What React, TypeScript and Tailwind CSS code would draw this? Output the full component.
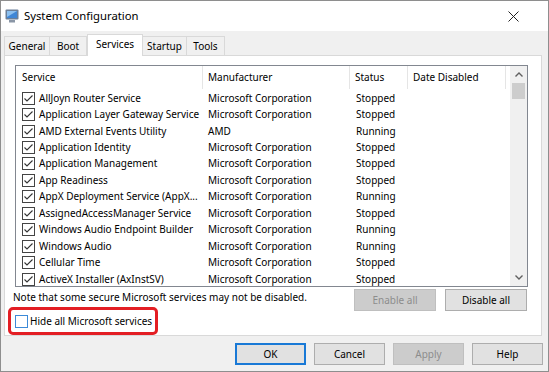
import React from 'react';

type Service = {
  name: string;
  maker: string;
  status: string;
};

const services: Service[] = [
  { name: 'AllJoyn Router Service', maker: 'Microsoft Corporation', status: 'Stopped' },
  { name: 'Application Layer Gateway Service', maker: 'Microsoft Corporation', status: 'Stopped' },
  { name: 'AMD External Events Utility', maker: 'AMD', status: 'Running' },
  { name: 'Application Identity', maker: 'Microsoft Corporation', status: 'Stopped' },
  { name: 'Application Management', maker: 'Microsoft Corporation', status: 'Stopped' },
  { name: 'App Readiness', maker: 'Microsoft Corporation', status: 'Stopped' },
  { name: 'AppX Deployment Service (AppX...', maker: 'Microsoft Corporation', status: 'Running' },
  { name: 'AssignedAccessManager Service', maker: 'Microsoft Corporation', status: 'Stopped' },
  { name: 'Windows Audio Endpoint Builder', maker: 'Microsoft Corporation', status: 'Running' },
  { name: 'Windows Audio', maker: 'Microsoft Corporation', status: 'Running' },
  { name: 'Cellular Time', maker: 'Microsoft Corporation', status: 'Stopped' },
  { name: 'ActiveX Installer (AxInstSV)', maker: 'Microsoft Corporation', status: 'Stopped' },
];

const tabs = [
  { label: 'General', w: 'w-[46px]' },
  { label: 'Boot', w: 'w-[38px]' },
  { label: 'Services', w: 'w-[56px]' },
  { label: 'Startup', w: 'w-[45px]' },
  { label: 'Tools', w: 'w-[39px]' },
];

const CheckBox = ({ checked }: { checked: boolean }) => (
  <div className="w-[13px] h-[13px] border border-[#444] bg-white shrink-0 flex items-center justify-center">
    {checked && (
      <svg width="11" height="11" viewBox="0 0 11 11" fill="none">
        <polyline points="1.5,5.5 4,8 9.5,2.5" stroke="#333" strokeWidth="1.1" />
      </svg>
    )}
  </div>
);

const WinButton = ({
  label,
  disabled,
  focused,
  className = '',
}: {
  label: string;
  disabled?: boolean;
  focused?: boolean;
  className?: string;
}) => (
  <button
    type="button"
    className={`h-[22px] flex items-center justify-center ${className} ${
      disabled
        ? 'bg-[#cccccc] border border-[#bfbfbf] text-[#8c8c8c]'
        : focused
        ? 'bg-[#e1e1e1] border-2 border-[#1979d6] text-black'
        : 'bg-[#e1e1e1] border border-[#adadad] text-black'
    }`}
  >
    {label}
  </button>
);

export default function App() {
  return (
    <div className="w-[549px] h-[372px] border border-[#8e8e8e] bg-[#f0f0f0] flex flex-col font-['Noto_Sans',sans-serif] text-[10px] text-black overflow-hidden">
      {/* title bar */}
      <div className="h-[30px] bg-white flex items-center pl-[4px] pr-[29px]">
        <svg width="14" height="14" viewBox="0 0 14 14">
          <rect x="0.5" y="0.5" width="13" height="10" rx="1" fill="#6b7f99" />
          <rect x="2" y="2" width="10" height="7" fill="#3f86d6" />
          <path d="M2 2h10L2 8z" fill="#8cc0f0" />
          <rect x="4" y="11" width="6" height="2.5" fill="#8a96a6" />
        </svg>
        <span className="ml-[5px] text-[11.3px]">System Configuration</span>
        <svg className="ml-auto" width="11" height="11" viewBox="0 0 11 11">
          <path d="M0.5 0.5L10.5 10.5M10.5 0.5L0.5 10.5" stroke="#222" strokeWidth="1" />
        </svg>
      </div>

      {/* tabs */}
      <div className="mt-[3px] h-[22px] flex items-end pl-[3px] relative z-10 -mb-px">
        {tabs.map((t) =>
          t.label === 'Services' ? (
            <div
              key={t.label}
              className={`${t.w} h-[22px] bg-white border border-b-0 border-[#d9d9d9] flex items-center justify-center pb-[2px]`}
            >
              {t.label}
            </div>
          ) : (
            <div
              key={t.label}
              className={`${t.w} h-[19px] mb-px bg-[#f0f0f0] border border-b-0 border-[#d9d9d9] -ml-px first:ml-0 flex items-center justify-center`}
            >
              {t.label}
            </div>
          )
        )}
      </div>

      {/* tab panel */}
      <div className="ml-[3px] mr-[6px] h-[281px] bg-white border border-[#d9d9d9] flex flex-col">
        <div className="mt-[9px] ml-[10px] w-[513px] h-[222px] border border-[#828790] flex overflow-hidden">
          <div className="flex-1 flex flex-col overflow-hidden">
            <div className="h-[23px] flex shrink-0">
              <div className="w-[187px] pl-[6px] flex items-center border-r border-[#e5e5e5]">Service</div>
              <div className="w-[147px] pl-[5px] flex items-center border-r border-[#e5e5e5]">Manufacturer</div>
              <div className="w-[58px] pl-[5px] flex items-center border-r border-[#e5e5e5]">Status</div>
              <div className="w-[98px] pl-[5px] flex items-center border-r border-[#e5e5e5]">Date Disabled</div>
            </div>
            <div className="pt-px">
              {services.map((s) => (
                <div key={s.name} className="h-[16.45px] flex items-center whitespace-nowrap">
                  <div className="w-[187px] pl-[6px] flex items-center gap-[4px] overflow-hidden">
                    <CheckBox checked />
                    <span>{s.name}</span>
                  </div>
                  <div className="w-[147px] pl-[5px] overflow-hidden">{s.maker}</div>
                  <div className="w-[58px] pl-[6px]">{s.status}</div>
                </div>
              ))}
            </div>
          </div>
          {/* scrollbar */}
          <div className="w-[17px] bg-[#f0f0f0] flex flex-col">
            <div className="h-[17px] flex items-center justify-center">
              <svg width="8" height="5" viewBox="0 0 8 5">
                <path d="M0.5 4.5L4 1L7.5 4.5" stroke="#606060" strokeWidth="1.4" fill="none" />
              </svg>
            </div>
            <div className="mx-[2px] h-[16px] bg-[#cdcdcd]" />
            <div className="flex-1" />
            <div className="h-[17px] flex items-center justify-center">
              <svg width="8" height="5" viewBox="0 0 8 5">
                <path d="M0.5 0.5L4 4L7.5 0.5" stroke="#606060" strokeWidth="1.4" fill="none" />
              </svg>
            </div>
          </div>
        </div>

        <div className="flex items-start mt-[2px]">
          <div className="flex flex-col">
            <div className="ml-[8px] h-[16px] flex items-center">
              Note that some secure Microsoft services may not be disabled.
            </div>
            <div className="ml-[3px] mt-[2px] w-[150px] h-[28px] border-[3px] border-[#e31e24] rounded-[5px] flex items-center pl-[4px] gap-[2px]">
              <div className="w-[13px] h-[13px] border border-[#3c8ad8] bg-white" />
              <span>Hide all Microsoft services</span>
            </div>
          </div>
          <div className="ml-auto mr-[14px] flex gap-[9px]">
            <WinButton label="Enable all" disabled className="w-[82px]" />
            <WinButton label="Disable all" className="w-[82px]" />
          </div>
        </div>
      </div>

      {/* dialog buttons */}
      <div className="mt-[7px] flex justify-end gap-[8px] pr-[5px]">
        <WinButton label="OK" focused className="w-[71px]" />
        <WinButton label="Cancel" className="w-[71px]" />
        <WinButton label="Apply" disabled className="w-[71px]" />
        <WinButton label="Help" className="w-[71px]" />
      </div>
    </div>
  );
}
